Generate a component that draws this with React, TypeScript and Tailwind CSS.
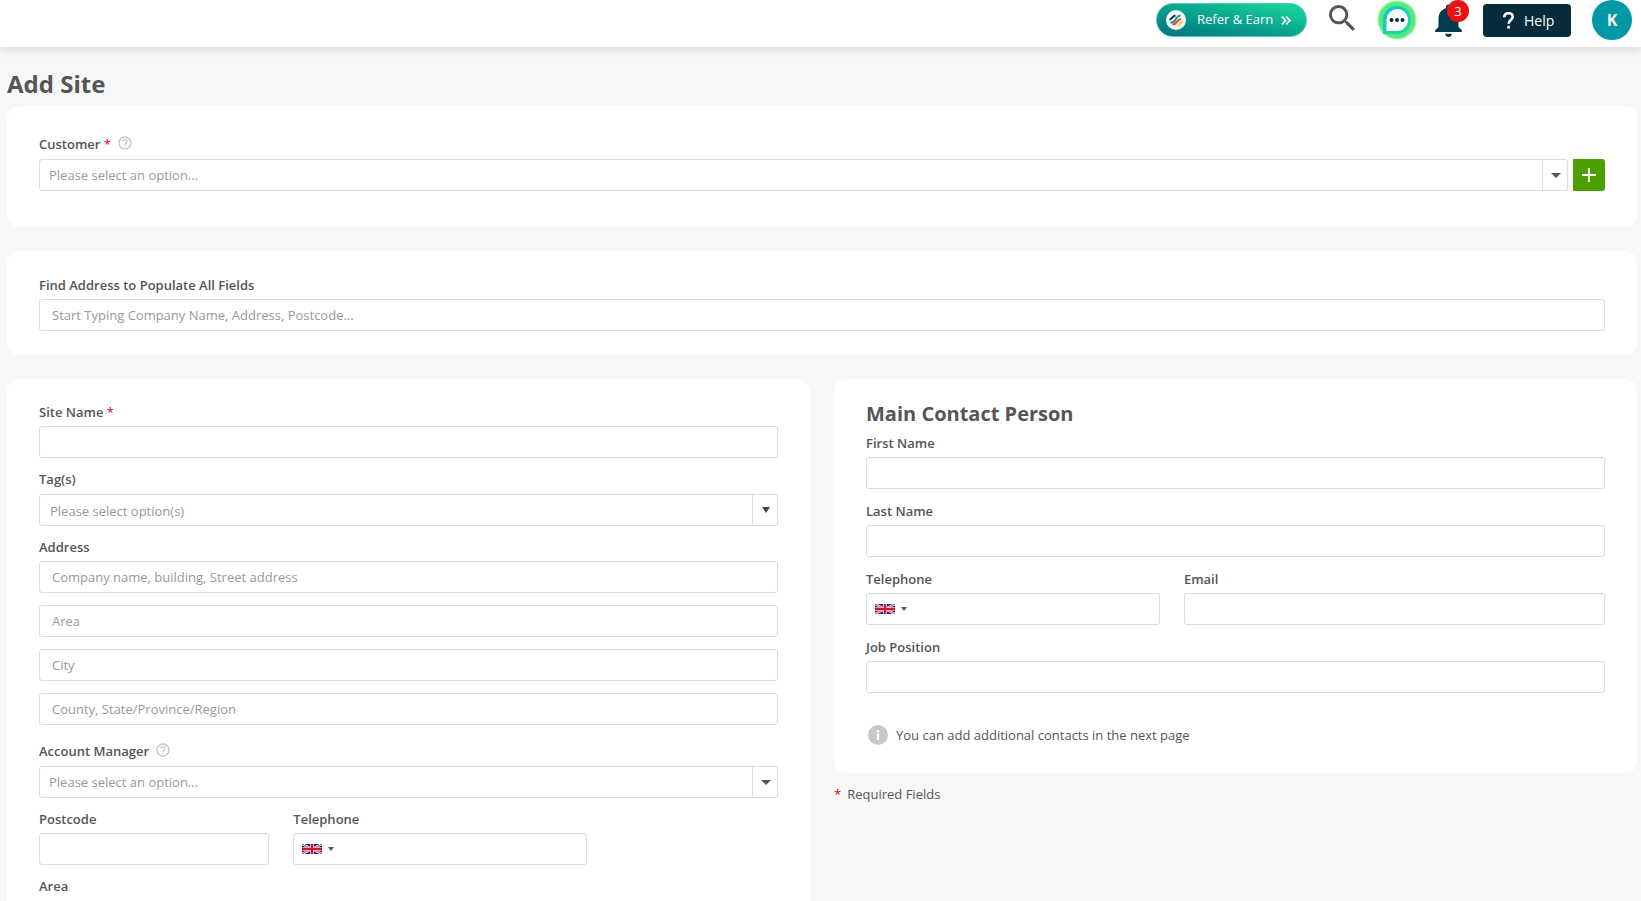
import { useId } from 'react';
import type { ReactNode } from 'react';
import { MdHelpOutline } from 'react-icons/md';

const control =
  'h-8 w-full min-w-0 rounded-[3px] border border-[#dcdcdc] bg-white text-[13px] text-[#555] placeholder:text-[#999] placeholder:opacity-100 outline-none focus:border-[#0097a7]';

function Star() {
  return <span className="font-normal text-[#e3000f]">*</span>;
}

function HelpIcon() {
  return (
    <button type="button" aria-label="More information" className="ml-[6px] h-4 w-4 text-[#c6c6c6]">
      <MdHelpOutline className="-mt-[3px] h-4 w-4" />
    </button>
  );
}

type FieldProps = {
  label: string;
  id: string;
  required?: boolean;
  help?: boolean;
  select?: boolean;
  className?: string;
  children: ReactNode;
};

function Field({ label, id, required, help, select, className = '', children }: FieldProps) {
  return (
    <div className={`flex flex-col ${select ? 'gap-[5px]' : 'gap-1'} ${className}`}>
      <div className="flex h-5 items-center text-[13px] leading-5 font-semibold">
        <label htmlFor={id}>
          {label} {required && <Star />}
        </label>
        {help && <HelpIcon />}
      </div>
      {children}
    </div>
  );
}

function TextField({ label, required, className, placeholder }: { label: string; required?: boolean; className?: string; placeholder?: string }) {
  const id = useId();
  return (
    <Field label={label} id={id} required={required} className={className}>
      <input id={id} type="text" placeholder={placeholder} className={`${control} px-3`} />
    </Field>
  );
}

function SelectField({ label, required, help, placeholder, multi, action }: { label: string; required?: boolean; help?: boolean; placeholder: string; multi?: boolean; action?: ReactNode }) {
  const id = useId();
  return (
    <Field label={label} id={id} required={required} help={help} select>
      <div className="flex gap-[5px]">
        <div className="grid flex-1">
          <select
            id={id}
            defaultValue=""
            className={`${control} col-start-1 row-start-1 appearance-none pr-8 text-[#999] ${multi ? 'pt-[3px] pl-[10px]' : 'pt-px pl-[9px]'}`}
          >
            <option value="">{placeholder}</option>
          </select>
          <span
            aria-hidden="true"
            className="pointer-events-none col-start-1 row-start-1 flex h-8 w-[26px] items-center justify-center justify-self-end border-l border-[#dcdcdc]"
          >
            {multi ? (
              <svg width="8" height="6" viewBox="0 0 8 6"><path d="M0 0h8L4 6z" fill="#34495e" /></svg>
            ) : (
              <svg width="10" height="5" viewBox="0 0 10 5"><path d="M0 0h10L5 5z" fill="#555" /></svg>
            )}
          </span>
        </div>
        {action}
      </div>
    </Field>
  );
}

function UkFlag() {
  return (
    <svg width="20" height="10" viewBox="0 0 60 30" preserveAspectRatio="none">
      <path fill="#0b2a7b" d="M0 0h60v30H0z" />
      <path d="M0 0l60 30M60 0L0 30" stroke="#fff" strokeWidth="7" />
      <path d="M0 0l60 30M60 0L0 30" stroke="#d8152f" strokeWidth="2.5" />
      <path d="M30 0v30M0 15h60" stroke="#fff" strokeWidth="11" />
      <path d="M30 0v30M0 15h60" stroke="#d8152f" strokeWidth="7" />
    </svg>
  );
}

function PhoneField({ className }: { className?: string }) {
  const id = useId();
  return (
    <Field label="Telephone" id={id} className={className}>
      <div className="flex h-8 items-center rounded-[3px] border border-[#dcdcdc] bg-white">
        <button type="button" aria-label="United Kingdom" className="flex h-full items-center gap-[6px] pl-2">
          <UkFlag />
          <svg width="6" height="4" viewBox="0 0 6 4"><path d="M0 0h6L3 4z" fill="#555" /></svg>
        </button>
        <input id={id} type="tel" className="h-full w-full min-w-0 flex-1 bg-transparent px-2 text-[13px] outline-none" />
      </div>
    </Field>
  );
}

function Header() {
  return (
    <header className="relative flex h-[47px] items-start justify-end bg-white pr-[9px] shadow-[0_2px_10px_rgba(0,0,0,0.14)]">
      <button
        type="button"
        className="mt-[3px] flex h-[34px] w-[151px] items-center rounded-full border border-[#57c3cf] bg-linear-to-tr from-[#04717f] to-[#1bdc98] pl-[9px] text-[13px] font-medium text-white"
      >
        <svg width="20" height="20" viewBox="0 0 20 20" fill="none" strokeWidth="2">
          <circle cx="10" cy="10" r="10" fill="#f4f8f8" />
          <path d="M3.500 9.500C5.500 9.500 6.500 6 9.500 5.500" stroke="#12324a" />
          <path d="M4.500 12.500c4 .5 4.500-2.500 6-4.500s2-2.500 4-2.500" stroke="#1493a0" />
          <path d="M6.500 14.500c4.500.5 4-5 8.500-5.500" stroke="#ee3f3c" />
          <path d="M11.500 15.500c3.500 0 2.500-3.500 5.500-4" stroke="#f8d21c" />
        </svg>
        <span className="ml-[11px]">Refer &amp; Earn</span>
        <svg className="ml-2" width="10" height="9" viewBox="0 0 10 9" fill="none" stroke="#fff" strokeWidth="1.800">
          <path d="M1 .7l3.500 3.800L1 8.300M5.300.7l3.500 3.800-3.500 3.800" />
        </svg>
      </button>
      <button type="button" aria-label="Search" className="mt-[5px] ml-[22px]">
        <svg width="26" height="26" viewBox="3 3 17.500 17.500" fill="#555">
          <path d="M15.500 14h-.79l-.28-.27A6.471 6.471 0 0 0 16 9.500 6.500 6.500 0 1 0 9.500 16c1.610 0 3.090-.59 4.230-1.570l.27.28v.79l5 4.990L20.490 19l-4.990-5zm-6 0C7.010 14 5 11.990 5 9.500S7.010 5 9.500 5 14 7.010 14 9.500 11.990 14 9.500 14z" />
        </svg>
      </button>
      <button type="button" aria-label="Chat" className="ml-[22px]">
        <svg width="40" height="40" viewBox="0 0 40 40">
          <defs>
            <linearGradient id="chat" x1="0" y1="0" x2="1" y2="1">
              <stop offset="0" stopColor="#0fc0d8" />
              <stop offset="1" stopColor="#22dd92" />
            </linearGradient>
          </defs>
          <circle cx="20" cy="20" r="19.500" fill="#8cf5a0" />
          <circle cx="20" cy="20" r="18" fill="#53ea7c" />
          <path d="M20 6a14 14 0 1 1 0 28H6V20A14 14 0 0 1 20 6z" fill="url(#chat)" />
          <path d="M20 9a11 11 0 1 1 0 22H9.500V20A11 11 0 0 1 20 9z" fill="#fff" />
          <g fill="#082b3b">
            <circle cx="14.500" cy="20" r="2" />
            <circle cx="20" cy="20" r="2" />
            <circle cx="25.500" cy="20" r="2" />
          </g>
        </svg>
      </button>
      <button type="button" aria-label="Notifications" className="relative ml-[18px] pt-1">
        <svg width="27" height="33" viewBox="4 2.200 16 19.800" fill="#053b4c">
          <path d="M12 22c1.100 0 2-.9 2-2h-4c0 1.100.89 2 2 2zm6-6v-5c0-3.070-1.640-5.640-4.500-6.320V4c0-.83-.67-1.500-1.500-1.500s-1.500.67-1.500 1.500v.68C7.630 5.360 6 7.920 6 11v5l-2 2v1h16v-1l-2-2z" />
        </svg>
        <span className="absolute top-0 -right-[7px] flex h-[22px] w-[22px] items-center justify-center rounded-full bg-[#ea1212] pt-px text-[13px] text-white">3</span>
      </button>
      <button type="button" className="mt-1 ml-[21px] flex h-[33px] w-[88px] items-center rounded bg-[#072b3b] pl-5 text-sm font-medium text-white">
        <svg width="11" height="17" viewBox="0 0 11 17" fill="none" stroke="#fff" strokeWidth="2.600">
          <path d="M1.300 5.200C1.300 2.700 3 1.300 5.500 1.300s4.200 1.500 4.200 3.700c0 3-4.100 3.100-4.100 6.800" />
          <path d="M5.600 13.800v2.800" />
        </svg>
        <span className="ml-[10px] leading-4">Help</span>
      </button>
      <button type="button" aria-label="Account" className="ml-[21px] h-10 w-10 rounded-full bg-[#0097a7] text-base font-bold text-[#fbf3e4]">
        K
      </button>
    </header>
  );
}

export default function App() {
  return (
    <div className="min-h-screen bg-[#f7f7f7] font-['Open_Sans',sans-serif] text-[13px] text-[#555]">
      <Header />
      <main className="pr-1 pb-6 pl-[7px]">
        <h1 className="pt-[21px] pb-[6px] text-2xl leading-8 font-bold">Add Site</h1>

        <div className="flex flex-col gap-6">
          <section className="rounded-xl bg-white px-8 pt-7 pb-9">
            <SelectField
              label="Customer"
              required
              help
              placeholder="Please select an option..."
              action={
                <button type="button" aria-label="Add customer" className="flex h-8 w-8 items-center justify-center rounded-r-[3px] bg-[#4ca000]">
                  <svg width="14" height="14" viewBox="0 0 14 14"><path d="M7 0v14M0 7h14" stroke="#fff" strokeWidth="2" /></svg>
                </button>
              }
            />
          </section>

          <section className="rounded-xl bg-white px-8 py-6">
            <TextField label="Find Address to Populate All Fields" placeholder="Start Typing Company Name, Address, Postcode..." />
          </section>

          <div className="grid grid-cols-2 items-start gap-6">
            <section className="flex flex-col gap-[11px] rounded-xl bg-white px-8 pt-[23px] pb-8">
              <TextField label="Site Name" required />
              <SelectField label="Tag(s)" placeholder="Please select option(s)" multi />
              <div className="mb-[5px] flex flex-col gap-3">
                <TextField label="Address" placeholder="Company name, building, Street address" />
                <input type="text" aria-label="Area" placeholder="Area" className={`${control} px-3`} />
                <input type="text" aria-label="City" placeholder="City" className={`${control} px-3`} />
                <input type="text" aria-label="County" placeholder="County, State/Province/Region" className={`${control} px-3`} />
              </div>
              <SelectField label="Account Manager" help placeholder="Please select an option..." />
              <div className="grid grid-cols-12 gap-6">
                <TextField label="Postcode" className="col-span-4" />
                <PhoneField className="col-span-5" />
              </div>
              <SelectField label="Area" placeholder="Please select an option..." />
            </section>

            <div>
              <section className="rounded-xl bg-white px-8 pt-5 pb-7">
                <h2 className="pb-1 text-xl leading-[30px] font-bold">Main Contact Person</h2>
                <div className="flex flex-col gap-3">
                  <TextField label="First Name" />
                  <TextField label="Last Name" />
                  <div className="grid grid-cols-12 gap-6">
                    <PhoneField className="col-span-5" />
                    <TextField label="Email" className="col-span-7" />
                  </div>
                  <TextField label="Job Position" />
                </div>
                <p className="mt-8 flex items-center gap-2 pl-[2px] leading-5">
                  <svg width="20" height="20" viewBox="0 0 20 20">
                    <circle cx="10" cy="10" r="10" fill="#c8c8c8" />
                    <path d="M8.800 5.200h2.400v2H8.800zM8.800 8.600h2.400V15H8.800z" fill="#fff" />
                  </svg>
                  You can add additional contacts in the next page
                </p>
              </section>
              <p className="mt-[11px] flex gap-[6px] leading-5">
                <Star />
                Required Fields
              </p>
            </div>
          </div>
        </div>
      </main>
    </div>
  );
}
